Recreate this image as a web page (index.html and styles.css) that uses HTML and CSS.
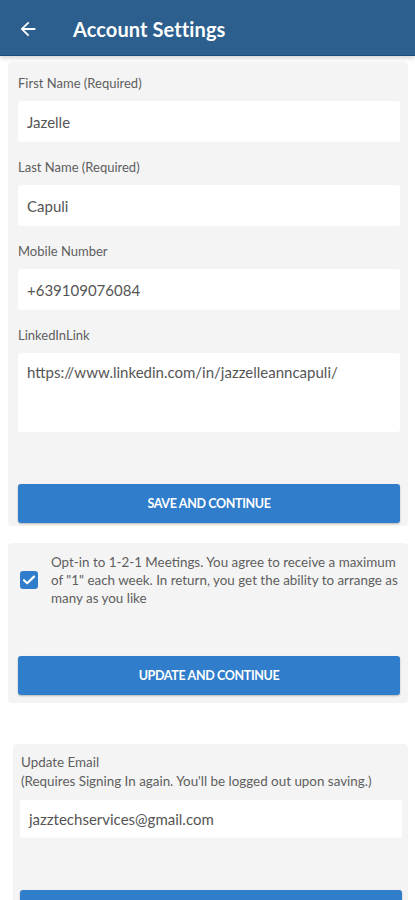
FILE: index.html
```html
<!DOCTYPE html>
<html lang="en">
<head>
<meta charset="utf-8">
<title>Account Settings</title>
<link rel="stylesheet" href="styles.css">
</head>
<body>
<header class="appbar">
  <svg class="back" viewBox="0 0 24 24" width="22" height="22" aria-hidden="true"><path d="M20 11H7.83l5.59-5.59L12 4l-8 8 8 8 1.41-1.41L7.83 13H20v-2z" fill="#fff"/></svg>
  <h1 class="title">Account Settings</h1>
</header>
<main class="content">
  <section class="card card-profile">
    <div class="field">
      <label class="label">First Name (Required)</label>
      <div class="input">Jazelle</div>
    </div>
    <div class="field">
      <label class="label">Last Name (Required)</label>
      <div class="input">Capuli</div>
    </div>
    <div class="field">
      <label class="label">Mobile Number</label>
      <div class="input">+639109076084</div>
    </div>
    <div class="field">
      <label class="label">LinkedInLink</label>
      <div class="input textarea">https://www.linkedin.com/in/jazzelleanncapuli/</div>
    </div>
    <button class="btn btn-save">SAVE AND CONTINUE</button>
  </section>

  <section class="card card-optin">
    <div class="optin">
      <span class="checkbox"><svg viewBox="0 0 18 18" width="18" height="18" aria-hidden="true"><path d="M4 9.2l3.2 3.1L14 5.6" fill="none" stroke="#fff" stroke-width="2.2" stroke-linecap="round" stroke-linejoin="round"/></svg></span>
      <p class="optin-text">Opt-in to 1-2-1 Meetings. You agree to receive a maximum of "1" each week. In return, you get the ability to arrange as many as you like</p>
    </div>
    <button class="btn btn-update">UPDATE AND CONTINUE</button>
  </section>

  <section class="card card-email">
    <p class="email-label">Update Email<br>(Requires Signing In again. You'll be logged out upon saving.)</p>
    <div class="input input-email">jazztechservices@gmail.com</div>
    <button class="btn btn-email" aria-label="Update email"></button>
  </section>
</main>
</body>
</html>
```
FILE: styles.css
```css
* { box-sizing: border-box; }
html, body { margin: 0; padding: 0; background: #fff; }
body {
  font-family: "Lato", "Open Sans", sans-serif;
  color: #555;
  width: 415px;
  height: 900px;
  overflow: hidden;
}
.appbar {
  height: 55px;
  background: #2c5f8e;
  display: flex;
  align-items: center;
  padding-left: 17px;
  box-shadow: 0 1px 0 #1f4a73, 0 3px 5px rgba(0,0,0,0.18);
  position: relative;
  z-index: 1;
}
.back { display: block; margin-top: 2px; }
.title {
  margin: 2px 0 0 34px;
  font-size: 20px;
  font-weight: 700;
  color: #fff;
  letter-spacing: 0.1px;
}
.content { padding-top: 7px; }
.card {
  background: #f4f4f4;
  border-radius: 4px;
}
.card-profile {
  margin: 0 7px 0 8px;
  padding: 13px 8px 3px 10px;
}
.field { margin-bottom: 17px; }
.field:last-of-type { margin-bottom: 0; }
.label {
  display: block;
  font-size: 13px;
  line-height: 16px;
  color: #5e5e5e;
  margin-bottom: 10px;
}
.input {
  background: #fff;
  height: 41px;
  border-radius: 3px;
  padding: 0 9px;
  display: flex;
  align-items: center;
  font-size: 15px;
  color: #555;
}
.textarea {
  height: 79px;
  align-items: flex-start;
  padding-top: 10px;
}
.btn {
  display: block;
  width: 100%;
  height: 39px;
  border: none;
  border-radius: 3px;
  background: #2f7dcb;
  color: #fff;
  font-family: "Lato", "Open Sans", sans-serif;
  font-weight: 700;
  font-size: 12.5px;
  letter-spacing: -0.35px;
  box-shadow: 0 1px 2px rgba(0,0,0,0.25);
  padding: 0;
}
.btn-save { margin-top: 52px; }
.card-optin {
  margin: 17px 7px 0 8px;
  padding: 10px 8px 8px 10px;
}
.optin {
  display: flex;
  align-items: center;
}
.checkbox {
  flex: none;
  width: 18px;
  height: 18px;
  border-radius: 3px;
  background: #2f7dcb;
  margin-left: 2px;
  margin-right: 13px;
  display: flex;
}
.optin-text {
  margin: 0;
  font-size: 13.4px;
  line-height: 18px;
  color: #5e5e5e;
}
.btn-update { margin-top: 49px; }
.card-email {
  margin: 41px 7px 0 13px;
  padding: 9px 6px 0 7px;
}
.email-label {
  margin: 0 0 0 1px;
  font-size: 13.4px;
  line-height: 19px;
  color: #5e5e5e;
}
.input-email {
  margin-top: 9px;
  height: 38px;
}
.btn-email { margin-top: 52px; }
```
